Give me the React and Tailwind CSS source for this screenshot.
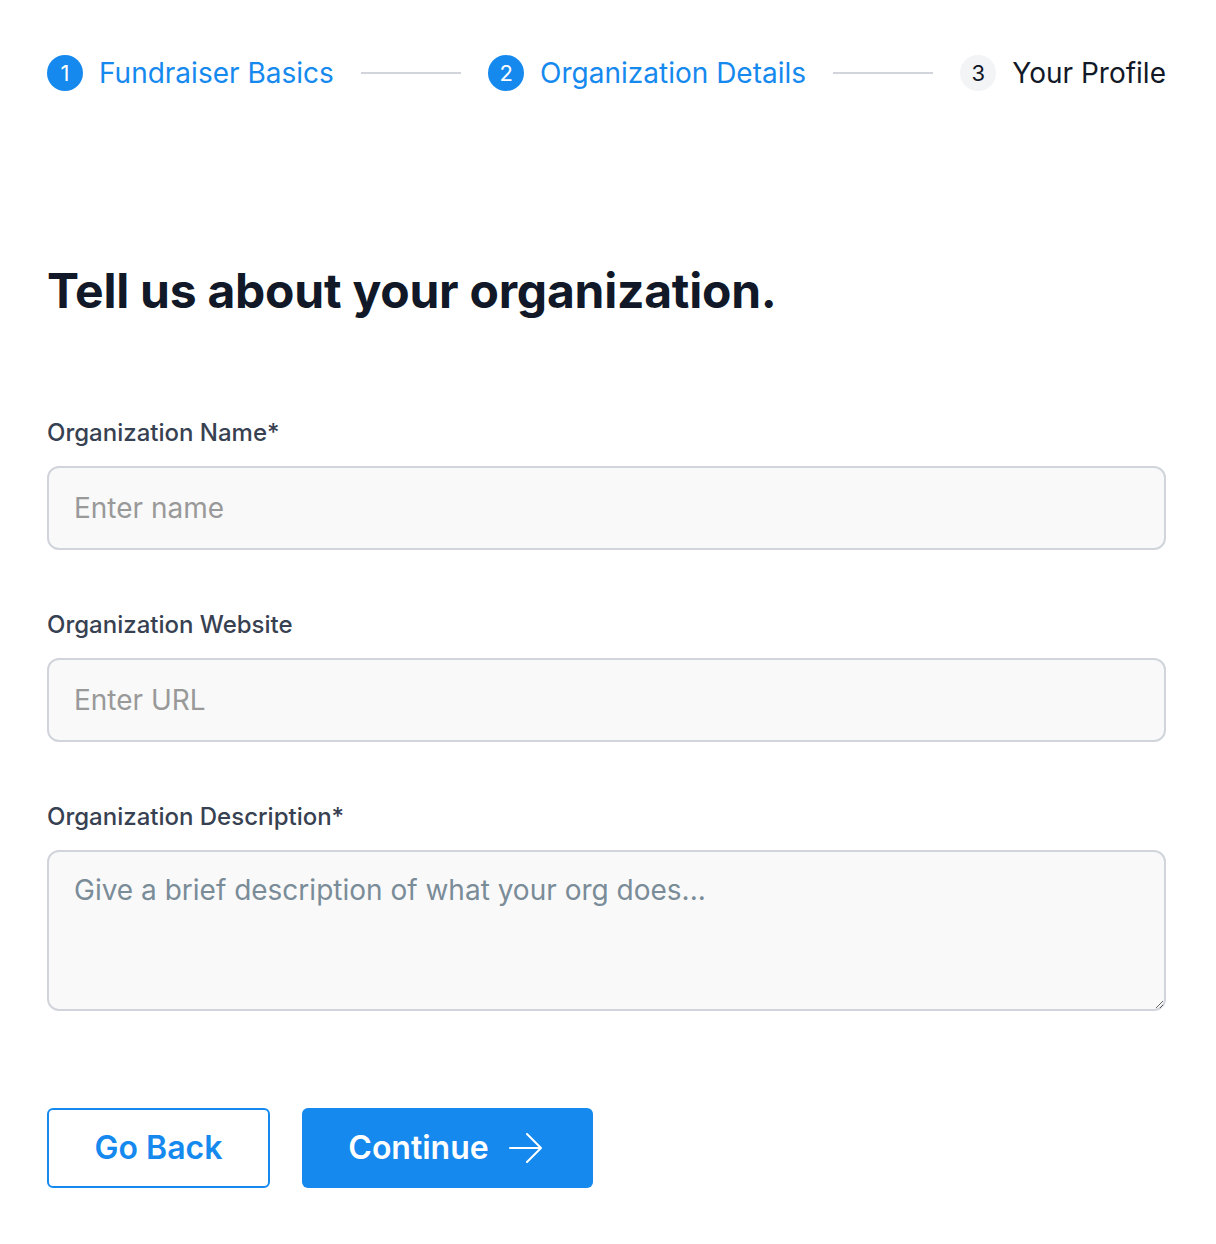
export default function App() {
  const font = { fontFamily: "Inter, 'Noto Sans', sans-serif" };
  return (
    <div className="min-h-[1244px] bg-white pl-[47px] pr-[50px] pt-[52px]" style={font}>
      {/* progress steps */}
      <div className="flex items-center justify-between">
        <div className="flex items-center gap-4">
          <div className="flex h-9 w-9 items-center justify-center rounded-full bg-[#1589ee] text-[22px] text-white">1</div>
          <span className="text-[28px] text-[#1589ee]">Fundraiser Basics</span>
        </div>
        <div className="h-[2px] w-[100px] bg-[#d1d5db]" />
        <div className="flex items-center gap-4">
          <div className="flex h-9 w-9 items-center justify-center rounded-full bg-[#1589ee] text-[22px] text-white">2</div>
          <span className="text-[28px] text-[#1589ee]">Organization Details</span>
        </div>
        <div className="h-[2px] w-[100px] bg-[#d1d5db]" />
        <div className="flex items-center gap-4">
          <div className="flex h-9 w-9 items-center justify-center rounded-full bg-[#f3f4f6] text-[22px] text-[#111827]">3</div>
          <span className="text-[28px] text-[#111827]">Your Profile</span>
        </div>
      </div>

      <h1 className="mt-[173px] text-[48px] font-bold leading-none tracking-[-0.005em] text-[#111827]">
        Tell us about your organization.
      </h1>

      <form className="mt-[106px] flex flex-col">
        <label className="text-[24px] font-medium leading-none text-[#374151]">Organization Name*</label>
        <input
          placeholder="Enter name"
          className="mt-[21px] h-[84px] w-full rounded-[12px] border-2 border-[#d1d5db] bg-[#f9f9f9] px-[25px] text-[28px] text-[#111827] outline-none placeholder:text-[#999999]"
        />

        <label className="mt-[63px] text-[24px] font-medium leading-none text-[#374151]">Organization Website</label>
        <input
          placeholder="Enter URL"
          className="mt-[21px] h-[84px] w-full rounded-[12px] border-2 border-[#d1d5db] bg-[#f9f9f9] px-[25px] text-[28px] text-[#111827] outline-none placeholder:text-[#999999]"
        />

        <label className="mt-[63px] text-[24px] font-medium leading-none text-[#374151]">Organization Description*</label>
        <textarea
          placeholder="Give a brief description of what your org does..."
          className="mt-[21px] h-[161px] w-full rounded-[12px] border-2 border-[#d1d5db] bg-[#f9f9f9] px-[25px] py-[20px] text-[28px] leading-[36px] text-[#111827] outline-none placeholder:text-[#7a8c98]"
        />

        <div className="mt-[97px] flex items-center gap-8">
          <button
            type="button"
            className="flex h-[80px] w-[223px] items-center justify-center rounded-[6px] border-2 border-[#1589ee] text-[32px] font-semibold text-[#1589ee]"
          >
            Go Back
          </button>
          <button
            type="button"
            className="flex h-[80px] w-[291px] items-center justify-center gap-[20px] rounded-[6px] bg-[#1589ee] pr-[4px] text-[32px] font-semibold text-white"
          >
            Continue
            <svg width="34" height="30" viewBox="0 0 34 30" fill="none" stroke="currentColor" strokeWidth="2" strokeLinecap="round" strokeLinejoin="round">
              <path d="M1 15H32M18 1l14 14-14 14" />
            </svg>
          </button>
        </div>
      </form>
    </div>
  );
}
